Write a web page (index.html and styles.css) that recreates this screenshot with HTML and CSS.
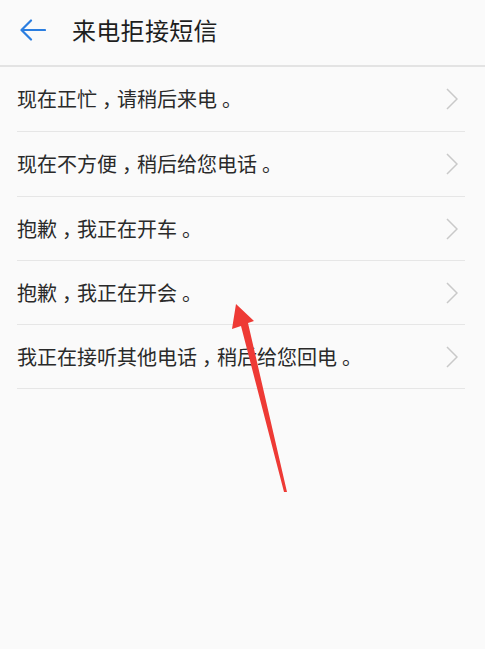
FILE: index.html
```html
<!DOCTYPE html>
<html lang="zh-CN">
<head>
<meta charset="utf-8">
<link rel="stylesheet" href="styles.css">
</head>
<body>
<div class="page">
  <header class="bar">
    <svg class="back" width="26" height="22" viewBox="0 0 26 22"><path d="M25 11H2M11 1.5L1.5 11 11 20.5" fill="none" stroke="#2b7ee0" stroke-width="2.2" stroke-linecap="round" stroke-linejoin="round"/></svg>
    <h1 class="title">来电拒接短信</h1>
  </header>
  <ul class="list">
    <li class="row r1"><span class="txt">现在正忙<span class="pn">，</span>请稍后来电<span class="pn">。</span></span><svg class="chev" width="12" height="22" viewBox="0 0 12 22"><path d="M1 1l10 10L1 21" fill="none" stroke="#c9c9c9" stroke-width="1.5"/></svg></li>
    <li class="row r2"><span class="txt">现在不方便<span class="pn">，</span>稍后给您电话<span class="pn">。</span></span><svg class="chev" width="12" height="22" viewBox="0 0 12 22"><path d="M1 1l10 10L1 21" fill="none" stroke="#c9c9c9" stroke-width="1.5"/></svg></li>
    <li class="row"><span class="txt">抱歉<span class="pn">，</span>我正在开车<span class="pn">。</span></span><svg class="chev" width="12" height="22" viewBox="0 0 12 22"><path d="M1 1l10 10L1 21" fill="none" stroke="#c9c9c9" stroke-width="1.5"/></svg></li>
    <li class="row"><span class="txt">抱歉<span class="pn">，</span>我正在开会<span class="pn">。</span></span><svg class="chev" width="12" height="22" viewBox="0 0 12 22"><path d="M1 1l10 10L1 21" fill="none" stroke="#c9c9c9" stroke-width="1.5"/></svg></li>
    <li class="row"><span class="txt">我正在接听其他电话<span class="pn">，</span>稍后给您回电<span class="pn">。</span></span><svg class="chev" width="12" height="22" viewBox="0 0 12 22"><path d="M1 1l10 10L1 21" fill="none" stroke="#c9c9c9" stroke-width="1.5"/></svg></li>
  </ul>
  <svg class="pointer" width="485" height="649" viewBox="0 0 485 649"><polygon points="236,304 254,321 248,323 287,492 284,492 241,326 232,329" fill="#ee3a35"/></svg>
</div>
</body>
</html>
```
FILE: styles.css
```css
html, body {
  margin: 0;
  padding: 0;
  background: #fafafa;
}
body {
  font-family: "Noto Sans CJK SC", "Noto Sans", sans-serif;
  color: #262626;
}
.page {
  position: relative;
  width: 485px;
  height: 649px;
  overflow: hidden;
}
.bar {
  height: 67px;
  box-sizing: border-box;
  display: flex;
  align-items: center;
  padding: 0 0 0 20px;
  border-bottom: 2px solid #e3e3e3;
}
.back {
  display: block;
  margin-top: -6px;
}
.title {
  margin: -6px 0 0 26px;
  font-size: 24px;
  font-weight: 400;
  color: #1e1e1e;
  letter-spacing: 0.3px;
}
.list {
  list-style: none;
  margin: 0;
  padding: 0 20px 0 17px;
}
.row {
  height: 64px;
  box-sizing: border-box;
  border-bottom: 1px solid #e6e6e6;
  display: flex;
  align-items: center;
  justify-content: space-between;
}
.row.r1 {
  height: 65px;
}
.row.r2 {
  height: 65px;
}
.txt {
  font-size: 20px;
  margin-top: -1px;
  color: #2a2a2a;
  white-space: nowrap;
}
.pn {
  font-feature-settings: "halt" 1;
  padding: 0 5px;
}
.chev {
  display: block;
  flex: none;
  margin-right: 7px;
}
.pointer {
  position: absolute;
  left: 0;
  top: 0;
  pointer-events: none;
}
```
